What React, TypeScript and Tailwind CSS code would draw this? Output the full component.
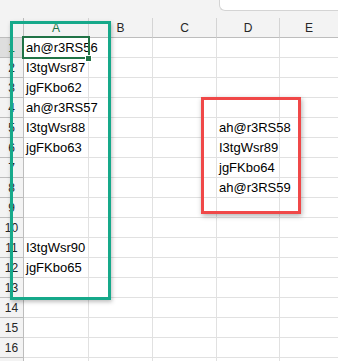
const columns = ["A", "B", "C", "D", "E"]

const cells: Record<string, string> = {
  A1: "ah@r3RS56",
  A2: "I3tgWsr87",
  A3: "jgFKbo62",
  A4: "ah@r3RS57",
  A5: "I3tgWsr88",
  A6: "jgFKbo63",
  A11: "I3tgWsr90",
  A12: "jgFKbo65",
  D5: "ah@r3RS58",
  D6: "I3tgWsr89",
  D7: "jgFKbo64",
  D8: "ah@r3RS59",
}

const rows = Array.from({ length: 17 }, (_, i) => i + 1)

function App() {
  return (
    <div className="relative w-[338px] h-[361px] overflow-hidden bg-white font-['Liberation_Sans',Arial,sans-serif]">
      {/* formula bar strip */}
      <div className="h-[18px] bg-[#f3f3f3] flex">
        <div className="ml-[219px] flex-1 h-[11px] bg-white border-l border-b border-[#d4d4d4] rounded-bl-[6px]" />
      </div>

      {/* sheet */}
      <div className="grid grid-cols-[24px_65px_64px_64px_63px_1fr]">
        <div className="h-[20px] bg-[#f3f3f3] border-r border-b border-[#bdbdbd]" />
        {columns.map((c) => (
          <div
            key={c}
            className={`h-[20px] bg-[#f3f3f3] border-b border-[#bdbdbd] flex items-center justify-center text-[12px] ${
              c === "A" ? "text-[#217346]" : "text-[#262626]"
            } ${c === "E" ? "" : "border-r border-r-[#d4d4d4]"}`}
          >
            {c}
          </div>
        ))}

        {rows.map((r) => (
          <Row key={r} r={r} />
        ))}
      </div>

      {/* selected cell A1 */}
      <div className="absolute left-[22px] top-[36px] w-[68px] h-[23px] border-2 border-[#217346] pointer-events-none" />
      <div className="absolute left-[85px] top-[55px] w-[5px] h-[5px] bg-[#217346] border border-white box-content" />

      {/* annotations */}
      <div className="absolute left-[10px] top-[21px] w-[101px] h-[279px] border-[3px] border-[#16a98a] shadow-[1px_2px_4px_rgba(0,0,0,0.25)]" />
      <div className="absolute left-[201px] top-[97px] w-[100px] h-[117px] border-[3px] border-[#f04848] shadow-[1px_2px_5px_rgba(0,0,0,0.3)]" />
    </div>
  )
}

function Row({ r }: { r: number }) {
  return (
    <>
      <div
        className={`h-[20px] border-r border-b border-[#bdbdbd] flex items-center justify-center text-[12px] ${
          r === 1 ? "bg-[#dedede] text-[#217346]" : "bg-[#f3f3f3] text-[#262626]"
        }`}
      >
        {r < 17 ? r : ""}
      </div>
      {columns.map((c) => (
        <div
          key={c}
          className={`h-[20px] pl-[2px] border-b border-[#e1e1e1] leading-[20px] text-[13px] text-black whitespace-nowrap ${
            c === "E" ? "" : "border-r"
          }`}
        >
          {cells[`${c}${r}`]}
        </div>
      ))}
    </>
  )
}

export default App
